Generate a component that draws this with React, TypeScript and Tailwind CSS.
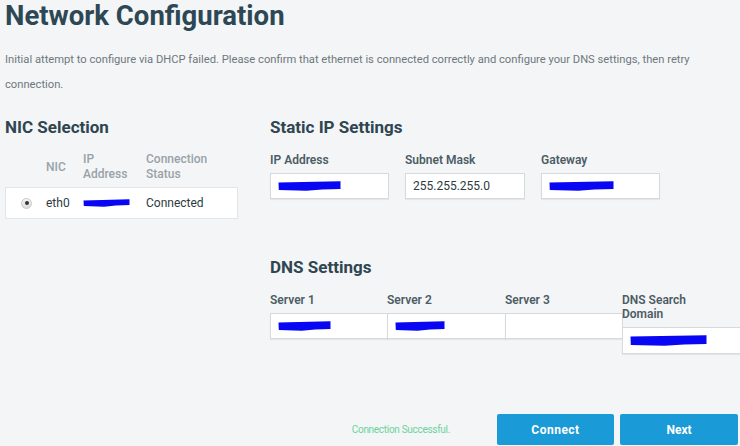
import React from "react";

const Redact = ({ w, h = 8 }: { w: number; h?: number }) => (
  <svg width={w} height={h} viewBox={`0 0 ${w} ${h}`} className="block">
    <path
      d={`M0.5 1.5 L${w * 0.6} 0.8 L${w - 0.5} 0.3 L${w - 0.5} ${h - 2} L${w * 0.7} ${h - 1.5} L${w * 0.45} ${h - 0.3} L0.8 ${h - 1} Z`}
      fill="#0806f2"
    />
  </svg>
);

const Field = ({ label, children, className = "" }: { label: React.ReactNode; children?: React.ReactNode; className?: string }) => (
  <div className="flex flex-col">
    <div className="text-[12px] leading-[14px] font-semibold text-[#4d5c64]">{label}</div>
    <div
      className={`mt-[6px] h-[26px] bg-white border border-[#d6dadd] shadow-[0_1px_1px_rgba(0,0,0,0.06)] flex items-center px-[7px] text-[12px] text-[#2d3a40] ${className}`}
    >
      {children}
    </div>
  </div>
);

export default function App() {
  return (
    <div className="w-[740px] h-[446px] overflow-hidden bg-[#f3f5f7] font-['Roboto','Liberation_Sans',sans-serif] flex flex-col">
      <div className="px-[5px]">
        <h1 className="text-[27.5px] leading-[32px] font-bold text-[#2d4854]">Network Configuration</h1>
        <p className="mt-[15px] text-[11.2px] leading-[25px] text-[#6f787d] pr-[10px]">
          Initial attempt to configure via DHCP failed. Please confirm that ethernet is connected correctly and configure your DNS settings, then retry connection.
        </p>

        <div className="flex gap-[32px] mt-[19px]">
          {/* NIC selection */}
          <div className="w-[233px] shrink-0">
            <h2 className="text-[17px] leading-[22px] font-bold text-[#2f4550]">NIC Selection</h2>
            <div className="mt-[14px] grid grid-cols-[41px_37px_63px_1fr] items-center text-[12px] leading-[15px] font-medium text-[#98a2a7]">
              <div />
              <div>NIC</div>
              <div>
                IP
                <br />
                Address
              </div>
              <div>
                Connection
                <br />
                Status
              </div>
            </div>
            <div className="mt-[5px] h-[32px] bg-white border border-[#e3e6e8] grid grid-cols-[40px_37px_63px_1fr] items-center text-[12px] text-[#2d3a40]">
              <div className="flex justify-center pl-[1px]">
                <span className="w-[11px] h-[11px] rounded-full border border-[#c4c9cc] bg-gradient-to-b from-[#f4f4f4] to-[#dcdcdc] flex items-center justify-center">
                  <span className="w-[4px] h-[4px] rounded-full bg-[#333]" />
                </span>
              </div>
              <div>eth0</div>
              <div className="flex items-center">
                <Redact w={47} h={8} />
              </div>
              <div>Connected</div>
            </div>
          </div>

          {/* Right side */}
          <div className="flex-1">
            <h2 className="text-[17px] leading-[22px] font-bold text-[#2f4550]">Static IP Settings</h2>
            <div className="mt-[15px] flex gap-[16px]">
              <div className="w-[119px]">
                <Field label="IP Address">
                  <Redact w={63} h={10} />
                </Field>
              </div>
              <div className="w-[120px]">
                <Field label="Subnet Mask">255.255.255.0</Field>
              </div>
              <div className="w-[119px]">
                <Field label="Gateway">
                  <Redact w={65} h={10} />
                </Field>
              </div>
            </div>

            <h2 className="mt-[57px] text-[17px] leading-[22px] font-bold text-[#2f4550]">DNS Settings</h2>
            <div className="mt-[15px] flex items-start">
              <div className="w-[118px]">
                <Field label="Server 1">
                  <Redact w={53} h={10} />
                </Field>
              </div>
              <div className="w-[119px] -ml-px">
                <Field label="Server 2">
                  <Redact w={50} h={10} />
                </Field>
              </div>
              <div className="w-[118px] -ml-px">
                <Field label="Server 3" />
              </div>
              <div className="w-[120px] -ml-px">
                <Field label={<>DNS Search<br />Domain</>} className="h-[27px]">
                  <Redact w={77} h={11} />
                </Field>
              </div>
            </div>
          </div>
        </div>
      </div>

      <div className="mt-auto flex items-center justify-end pr-[2px] pb-px">
        <span className="text-[10px] tracking-[-0.3px] text-[#6bd39b] mr-[47px]">Connection Successful.</span>
        <button className="w-[117px] h-[31px] rounded-[2px] bg-[#1b9ad8] text-white text-[12px] font-bold tracking-[0.5px]">Connect</button>
        <button className="ml-[6px] w-[118px] h-[31px] rounded-[2px] bg-[#1b9ad8] text-white text-[12px] font-bold">Next</button>
      </div>
    </div>
  );
}
